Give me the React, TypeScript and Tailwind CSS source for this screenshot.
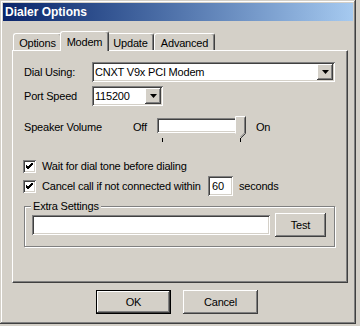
const raised =
  "bg-[#d4d0c8] shadow-[inset_-1px_-1px_#404040,inset_1px_1px_#ffffff,inset_-2px_-2px_#808080,inset_2px_2px_#d4d0c8]";
const sunken =
  "bg-white shadow-[inset_1px_1px_#808080,inset_-1px_-1px_#ffffff,inset_2px_2px_#404040,inset_-2px_-2px_#d4d0c8]";

function Tab({ label, width, active }: { label: string; width: string; active?: boolean }) {
  return (
    <div
      className={
        "flex items-start justify-center rounded-t-[3px] border-l border-t border-white bg-[#d4d0c8] shadow-[inset_-1px_0_#808080] " +
        width +
        (active
          ? " relative z-10 -mx-[2px] -mb-px h-[20px] border-r border-r-[#404040] pt-[2px]"
          : " h-[17px] border-r border-r-[#404040] pt-px")
      }
    >
      {label}
    </div>
  );
}

function DropArrow() {
  return (
    <div className={"m-[2px] flex h-[16px] w-[16px] items-center justify-center " + raised}>
      <svg width="7" height="4" viewBox="0 0 7 4">
        <polygon points="0,0 7,0 3.5,4" fill="#000" />
      </svg>
    </div>
  );
}

function Select({ value, width }: { value: string; width: string }) {
  return (
    <div className={"flex h-[20px] items-center " + sunken + " " + width}>
      <span className="flex-1 pl-[3px]">{value}</span>
      <DropArrow />
    </div>
  );
}

function CheckBox() {
  return (
    <div className={"flex h-[13px] w-[13px] shrink-0 items-center justify-center " + sunken}>
      <svg width="7" height="7" viewBox="0 0 7 7">
        <path d="M0 2 L2 4 L7 -1 M0 3 L2 5 L7 0 M0 4 L2 6 L7 1" stroke="#000" strokeWidth="1" fill="none" />
      </svg>
    </div>
  );
}

function Button({ label, width, isDefault }: { label: string; width: string; isDefault?: boolean }) {
  return (
    <div className={"flex items-center justify-center " + width + (isDefault ? " border border-black" : "")}>
      <div className={"flex h-full w-full items-center justify-center " + raised}>{label}</div>
    </div>
  );
}

export default function App() {
  return (
    <div className="h-[326px] w-[360px] bg-[#d4d0c8] font-['Liberation_Sans',Arial,sans-serif] text-[11px] tracking-[-0.2px] text-black">
      <div className="h-[324px] w-[356px] bg-[#d4d0c8] p-[3px] shadow-[inset_-1px_-1px_#404040,inset_1px_1px_#d4d0c8,inset_-2px_-2px_#808080,inset_2px_2px_#ffffff]">
        {/* title bar */}
        <div className="flex h-[18px] items-center bg-gradient-to-r from-[#0a246a] to-[#a6caf0] pl-[2px] text-[12px] font-bold tracking-normal text-white">
          Dialer Options
        </div>

        {/* tabs */}
        <div className="ml-[10px] mt-[10px] flex h-[19px] items-end">
          <Tab label="Options" width="w-[49px]" />
          <Tab label="Modem" width="w-[49px]" active />
          <Tab label="Update" width="w-[47px]" />
          <Tab label="Advanced" width="w-[61px]" />
        </div>

        {/* panel */}
        <div className="ml-[9px] h-[233px] w-[336px] border-l border-t border-white border-b border-r border-b-[#404040] border-r-[#404040] pl-[11px] pt-[11px] shadow-[inset_-1px_-1px_#808080]">
          <div className="flex h-[20px] items-center">
            <span className="w-[68px]">Dial Using:</span>
            <Select value="CNXT V9x PCI Modem" width="w-[243px]" />
          </div>
          <div className="mt-[4px] flex h-[20px] items-center">
            <span className="w-[68px]">Port Speed</span>
            <Select value="115200" width="w-[71px]" />
          </div>

          {/* speaker volume */}
          <div className="mt-[9px] flex h-[24px] items-center">
            <span className="w-[109px]">Speaker Volume</span>
            <span className="w-[24px]">Off</span>
            <div className="relative h-[24px] w-[90px]">
              <div className={"absolute left-0 top-[3px] h-[15px] w-[84px] " + sunken} />
              <svg className="absolute left-[78px] top-px" width="11" height="23" viewBox="0 0 11 23">
                <polygon points="0.5,0.5 10.5,0.5 10.5,17.5 5.5,22.5 0.5,17.5" fill="#d4d0c8" />
                <polyline points="0.5,17.5 0.5,0.5 10.5,0.5" stroke="#fff" fill="none" />
                <polyline points="10.5,0.5 10.5,17.5 5.5,22.5" stroke="#404040" fill="none" />
                <polyline points="9.5,1.5 9.5,17 5.5,21" stroke="#808080" fill="none" />
              </svg>
              <div className="absolute left-[5px] top-[23px] h-[4px] w-px bg-black" />
              <div className="absolute left-[83px] top-[23px] h-[4px] w-px bg-black" />
            </div>
            <span className="ml-[9px]">On</span>
          </div>

          {/* checkboxes */}
          <div className="ml-[-1px] mt-[21px] flex h-[13px] items-center">
            <CheckBox />
            <span className="ml-[6px] whitespace-nowrap">Wait for dial tone before dialing</span>
          </div>
          <div className="ml-[-1px] mt-[3px] flex h-[20px] items-center">
            <CheckBox />
            <span className="ml-[6px] w-[166px] shrink-0 whitespace-nowrap">Cancel call if not connected within</span>
            <div className={"flex h-[20px] w-[25px] shrink-0 items-center pl-[4px] " + sunken}>60</div>
            <span className="ml-[6px]">seconds</span>
          </div>

          {/* group box */}
          <div className="relative mt-[10px] h-[41px] w-[311px] border border-[#808080] shadow-[inset_1px_1px_#ffffff,1px_1px_#ffffff]">
            <span className="absolute -top-[8px] left-[6px] bg-[#d4d0c8] px-[2px] leading-[14px]">Extra Settings</span>
            <div className="flex items-start pl-[7px]">
              <div className={"mt-[8px] h-[20px] w-[238px] " + sunken} />
              <Button label="Test" width="ml-[5px] mt-[6px] h-[24px] w-[51px]" />
            </div>
          </div>
        </div>

        {/* bottom buttons */}
        <div className="mt-[7px] flex justify-center gap-[12px] pr-[2px]">
          <Button label="OK" width="h-[24px] w-[75px]" isDefault />
          <Button label="Cancel" width="h-[24px] w-[75px]" />
        </div>
      </div>
    </div>
  );
}
